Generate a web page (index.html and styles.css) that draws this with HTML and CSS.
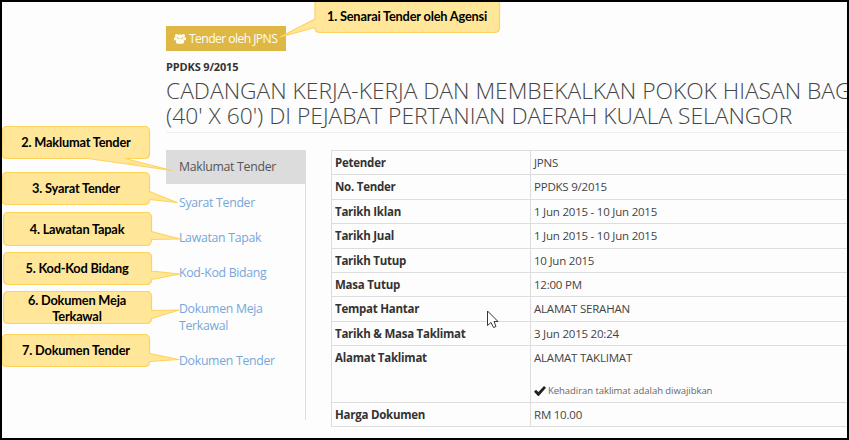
FILE: index.html
```
<!DOCTYPE html>
<html lang="ms">
<head>
<meta charset="utf-8">
<title>Maklumat Tender</title>
<link rel="stylesheet" href="styles.css">
</head>
<body>
<main class="page">
  <a class="agency"><svg class="users" viewBox="0 0 14 12"><circle cx="3" cy="2.6" r="1.9"/><circle cx="11" cy="2.6" r="1.9"/><circle cx="7" cy="3.8" r="2.7"/><path d="M0 8V5.500Q0 4.500 1 4.500H4Q4 6.500 5 7Q3 7 2.700 8ZM14 8V5.500Q14 4.500 13 4.500H10Q10 6.500 9 7Q11 7 11.300 8ZM2.300 10.200Q2.300 6.500 4.500 6.500H9.500Q11.700 6.500 11.700 10.200Q11.700 12 10 12H4Q2.300 12 2.300 10.200Z"/></svg><span class="agency-text">Tender oleh JPNS</span></a>
  <div class="code">PPDKS 9/2015</div>
  <h1 class="title"><span class="line">CADANGAN KERJA-KERJA DAN MEMBEKALKAN POKOK HIASAN BAG</span><span class="line">(40' X 60') DI PEJABAT PERTANIAN DAERAH KUALA SELANGOR</span></h1>
  <div class="columns">
    <nav class="menu">
      <a class="item active">Maklumat Tender</a>
      <a class="item">Syarat Tender</a>
      <a class="item">Lawatan Tapak</a>
      <a class="item">Kod-Kod Bidang</a>
      <a class="item">Dokumen Meja Terkawal</a>
      <a class="item">Dokumen Tender</a>
    </nav>
    <dl class="details">
      <dt>Petender</dt><dd>JPNS</dd>
      <dt>No. Tender</dt><dd>PPDKS 9/2015</dd>
      <dt>Tarikh Iklan</dt><dd>1 Jun 2015 - 10 Jun 2015</dd>
      <dt>Tarikh Jual</dt><dd>1 Jun 2015 - 10 Jun 2015</dd>
      <dt>Tarikh Tutup</dt><dd>10 Jun 2015</dd>
      <dt>Masa Tutup</dt><dd>12:00 PM</dd>
      <dt>Tempat Hantar</dt><dd>ALAMAT SERAHAN</dd>
      <dt>Tarikh &amp; Masa Taklimat</dt><dd>3 Jun 2015 20:24</dd>
      <dt>Alamat Taklimat</dt><dd>ALAMAT TAKLIMAT<div class="note"><svg class="check" viewBox="0 0 12 10"><path d="M0 5.700L2 3.800L4.400 6L10 0L12 1.700L4.800 10H4Z"/></svg><span>Kehadiran taklimat adalah diwajibkan</span></div></dd>
      <dt>Harga Dokumen</dt><dd>RM 10.00</dd>
    </dl>
  </div>
</main>
<svg class="shapes" viewBox="0 0 849 440">
  <path d="M319.500 -3H495Q499.500 -3 499.500 2V27.500Q499.500 32.500 494.500 32.500H320Q315 32.500 315 27.500L280 37L315 19V2Q315 -3 319.500 -3Z"/>
  <path d="M7 126.500H144.500Q149.500 126.500 149.500 131.500V153.500Q149.500 158.500 144.500 158.500H125L172 170.500L88 158.500H7Q2 158.500 2 153.500V131.500Q2 126.500 7 126.500Z"/>
  <path d="M7 172.500H144.500Q149.500 172.500 149.500 177.500V191.500L177 202.500L149.500 199.500Q149.500 204.500 144.500 204.500H7Q2 204.500 2 199.500V177.500Q2 172.500 7 172.500Z"/>
  <path d="M8.500 212.500H146.500Q151.500 212.500 151.500 217.500V231.500L180 239L151.500 239.500Q151.500 245.500 146.500 245.500H8.500Q3.500 245.500 3.500 240.500V217.500Q3.500 212.500 8.500 212.500Z"/>
  <path d="M8.500 252.500H146.500Q151.500 252.500 151.500 257.500V271L180 274L151.500 279.500Q151.500 284.500 146.500 284.500H8.500Q3.500 284.500 3.500 279.500V257.500Q3.500 252.500 8.500 252.500Z"/>
  <path d="M8.500 291.500H146.500Q151.500 291.500 151.500 296.500V310.500L179 310L151.500 318.500Q151.500 323.500 146.500 323.500H8.500Q3.500 323.500 3.500 318.500V296.500Q3.500 291.500 8.500 291.500Z"/>
  <path d="M7 334.500H144.500Q149.500 334.500 149.500 339.500V353.500L179 359.500L149.500 361.500Q149.500 366.500 144.500 366.500H7Q2 366.500 2 361.500V339.500Q2 334.500 7 334.500Z"/>
  <path class="cursor" d="M487.500 311V325.500L491 322.500L493.500 327.500L496 326.500L494 321.500H498Z"/>
</svg>
<div class="callout c1">1. Senarai Tender oleh Agensi</div>
<div class="callout c2">2. Maklumat Tender</div>
<div class="callout c3">3. Syarat Tender</div>
<div class="callout c4">4. Lawatan Tapak</div>
<div class="callout c5">5. Kod-Kod Bidang</div>
<div class="callout c6">6. Dokumen Meja<br>Terkawal</div>
<div class="callout c7">7. Dokumen Tender</div>
<div class="frame"></div>
</body>
</html>
```
FILE: styles.css
```
* { box-sizing: border-box; }
body { margin: 0; width: 849px; height: 440px; overflow: hidden; position: relative; background: #fdfdfd; font-family: "Open Sans", sans-serif; color: #444; }
.page { padding: 26px 0 0 166px; height: 440px; overflow: hidden; }
.agency { display: flex; align-items: center; width: 120px; height: 25px; padding-left: 8px; gap: 3px; background: #dfb745; color: #fffdf2; font-size: 12.2px; letter-spacing: -.6px; white-space: nowrap; }
.users { width: 12px; height: 11px; fill: currentColor; flex: none; }
.code { height: 26px; padding-top: 8px; font-size: 11px; line-height: 16px; font-weight: 700; letter-spacing: -.15px; color: #333; }
.title { margin: 0; height: 56px; padding-top: 1px; border-bottom: 1px solid #eee; font-size: 22.8px; line-height: 25px; font-weight: 300; white-space: nowrap; }
.line { display: block; height: 25px; }
.columns { display: flex; align-items: flex-start; padding-top: 17px; gap: 25px; }
.menu { width: 140px; height: 270px; flex: none; border-right: 1px solid #ddd; font-size: 12.3px; letter-spacing: -.3px; line-height: 17px; color: #77a7d8; }
.item { display: block; padding: 9px 13px; margin-bottom: .2px; }
.active { background: #dcdcdc; color: #555; height: 34px; padding-top: 8px; margin-bottom: 1px; }
.details { margin: 0; width: 530px; display: grid; grid-template-columns: 199px 1fr; grid-template-rows: repeat(8, 24.4px) 56.6px 24.4px; border: 1px solid #ddd; border-width: 1px 0 0 1px; font-size: 11.5px; line-height: 16px; }
dt, dd { margin: 0; padding: 4px 4px 0 3px; border-bottom: 1px solid #ddd; white-space: nowrap; }
dt { font-weight: 700; letter-spacing: -.25px; color: #333; border-right: 1px solid #ddd; }
dd { letter-spacing: -.22px; }
.note { display: flex; align-items: center; gap: 2px; margin-top: 17px; font-size: 9.5px; letter-spacing: -.05px; line-height: 16px; color: #666; }
.check { width: 12px; height: 10px; fill: #222; }
.shapes { position: absolute; left: 0; top: 0; width: 849px; height: 440px; fill: #ffe699; stroke: #ffd25a; stroke-width: 1.2; stroke-linejoin: round; }
.shapes .cursor { fill: #fff; stroke: #334; stroke-width: 1; }
.callout { position: absolute; display: flex; align-items: center; justify-content: center; text-align: center; height: 32px; width: 148px; font: bold 12.8px/16px Lato, sans-serif; letter-spacing: -.2px; color: #000; white-space: nowrap; }
.c1 { left: 315px; top: 0; width: 184px; }
.c2 { left: 2px; top: 126px; }
.c3 { left: 2px; top: 172px; }
.c4 { left: 3px; top: 213px; }
.c5 { left: 3px; top: 252px; }
.c6 { left: 3px; top: 292px; }
.c7 { left: 2px; top: 334px; }
.frame { position: absolute; inset: 0; border: 2px solid #000; }
```
